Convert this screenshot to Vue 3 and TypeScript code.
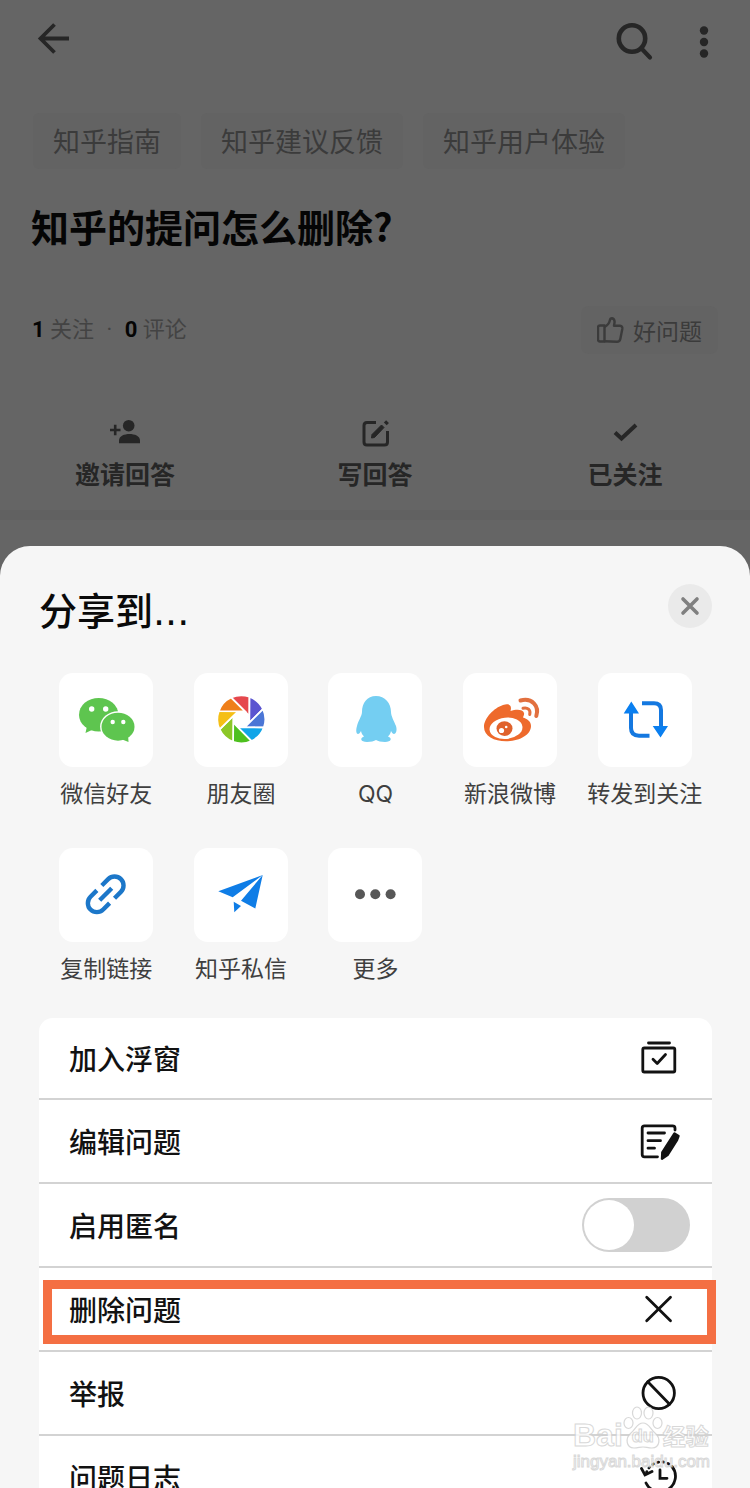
<script setup lang="ts">
import { ref } from 'vue'

interface ShareTarget { id: string; label: string }
interface MenuRow { id: string; label: string; highlighted?: boolean }

const tags: string[] = ['知乎指南', '知乎建议反馈', '知乎用户体验']

const actions = [
  { id: 'invite', label: '邀请回答' },
  { id: 'write', label: '写回答' },
  { id: 'followed', label: '已关注' },
]

const targets: ShareTarget[] = [
  { id: 'wechat', label: '微信好友' },
  { id: 'moments', label: '朋友圈' },
  { id: 'qq', label: 'QQ' },
  { id: 'weibo', label: '新浪微博' },
  { id: 'repost', label: '转发到关注' },
  { id: 'link', label: '复制链接' },
  { id: 'message', label: '知乎私信' },
  { id: 'more', label: '更多' },
]

const rows: MenuRow[] = [
  { id: 'float', label: '加入浮窗' },
  { id: 'edit', label: '编辑问题' },
  { id: 'anonymous', label: '启用匿名' },
  { id: 'delete', label: '删除问题', highlighted: true },
  { id: 'report', label: '举报' },
  { id: 'log', label: '问题日志' },
]

const anonymous = ref(false)

// Aperture blades: each one is a rim arc closed by a corner of the inner octagon.
const bladeColors = ['#e5484d', '#5b55d0', '#4b76d6', '#10a5e8', '#4ec01e', '#8cc727', '#f5bf16', '#ef7f1a']
const point = (radius: number, degrees: number): string => {
  const a = (degrees * Math.PI) / 180
  return `${(47.3 + radius * Math.cos(a)).toFixed(2)} ${(46.3 + radius * Math.sin(a)).toFixed(2)}`
}
const blades = bladeColors.map((fill, i) => {
  const start = -115 + i * 45
  return { fill, d: `M${point(24, start)}A24 24 0 0 1 ${point(24, start + 45)}L${point(8.8, start + 94.5)}Z` }
})
</script>

<template>
  <div class="screen">
    <main class="question">
      <header class="topbar">
        <button class="icon-btn" aria-label="返回">
          <svg viewBox="0 0 44 44"><path d="M37 18.5H8.500M22.500 4.500L8.500 18.500L22.500 32.500" fill="none" stroke="currentColor" stroke-width="3.8" /></svg>
        </button>
        <div class="topbar-right">
          <button class="icon-btn" aria-label="搜索">
            <svg viewBox="0 0 44 44"><g fill="none" stroke="currentColor" stroke-width="4.6"><circle cx="20" cy="18.500" r="13.200" /><path d="M29.500 28.500L38 37.500" stroke-linecap="round" stroke-width="4.2" /></g></svg>
          </button>
          <button class="icon-btn" aria-label="菜单">
            <svg viewBox="0 0 44 44" fill="currentColor"><circle cx="22" cy="10.500" r="4.200" /><circle cx="22" cy="22" r="4.200" /><circle cx="22" cy="33.500" r="4.200" /></svg>
          </button>
        </div>
      </header>

      <div class="tags">
        <a v-for="tag in tags" :key="tag" href="#" class="tag">{{ tag }}</a>
      </div>

      <h1 class="title">知乎的提问怎么删除?</h1>

      <div class="stats">
        <p class="counts"><b>1</b> 关注 <span class="dot">·</span> <b>0</b> 评论</p>
        <button class="good">
          <svg viewBox="0 0 28 28" fill="none" stroke="currentColor" stroke-width="2.4" stroke-linejoin="round">
            <path d="M3 9.500H7.500V25.500H3Q1 25.500 1 23.500V11.500Q1 9.500 3 9.500Z" />
            <path d="M7.500 11Q12 8.500 12.800 4.500Q13.200 2.300 15 2.300Q17.500 2.800 17.600 6L17 9.800H23Q25.800 10 25.300 13L23.300 23Q22.700 25.800 20 25.800L7.500 25.300" />
          </svg>
          <span>好问题</span>
        </button>
      </div>

      <nav class="actions">
        <button v-for="action in actions" :key="action.id" class="action">
          <svg v-if="action.id === 'invite'" viewBox="0 0 32 32" fill="currentColor">
            <circle cx="19.700" cy="9.700" r="5.800" />
            <path d="M10 27.300V24.500C10 20 15.500 18 20.500 18S31 20 31 24.500V27.300Z" />
            <path d="M1 14H11.500M6.200 8.700V19.300" stroke="currentColor" stroke-width="2.600" />
          </svg>
          <svg v-else-if="action.id === 'write'" viewBox="0 0 32 32" fill="none" stroke="currentColor" stroke-width="3">
            <path d="M17 6.500H8Q5 6.500 5 9.500V26Q5 29 8 29H25.500Q28.500 29 28.500 26V15" />
            <path d="M12.500 22L13 18.500L22.500 9L25 11.500L15.500 21.500Z" fill="currentColor" stroke-width="1" />
            <path d="M26.300 7.900L28.500 5.700" stroke-width="4" />
          </svg>
          <svg v-else viewBox="0 0 32 32" fill="none" stroke="currentColor" stroke-width="4"><path d="M6 16.500L12.500 22.500L27 9" /></svg>
          <span>{{ action.label }}</span>
        </button>
      </nav>
      <div class="band"></div>
    </main>

    <section class="sheet" role="dialog" aria-labelledby="sheet-title">
      <header class="sheet-head">
        <h2 id="sheet-title">分享到<span class="ellipsis">...</span></h2>
        <button class="close" aria-label="关闭">
          <svg viewBox="0 0 44 44"><path d="M15 15L29 29M29 15L15 29" stroke="currentColor" stroke-width="3.600" stroke-linecap="round" /></svg>
        </button>
      </header>

      <div class="targets">
        <button v-for="target in targets" :key="target.id" class="target">
          <span class="tile">
            <svg v-if="target.id === 'wechat'" viewBox="0 0 94 94">
              <g fill="#5ec54f">
                <path d="M28 53L26.500 60L35 56Z" /><ellipse cx="39.700" cy="41.700" rx="19.700" ry="16.800" />
                <ellipse cx="59" cy="53.700" rx="17.900" ry="15.400" fill="#fff" />
                <path d="M69 61L69.500 69L62 66Z" /><ellipse cx="59" cy="53.700" rx="16.500" ry="14" />
              </g>
              <g fill="#fff"><circle cx="32.700" cy="36" r="2.700" /><circle cx="46.700" cy="36" r="2.700" /><circle cx="53.700" cy="49" r="2.200" /><circle cx="64.300" cy="49" r="2.200" /></g>
            </svg>
            <svg v-else-if="target.id === 'moments'" viewBox="0 0 94 94">
              <path v-for="blade in blades" :key="blade.fill" :d="blade.d" :fill="blade.fill" stroke="#fff" stroke-width="1.800" />
            </svg>
            <svg v-else-if="target.id === 'qq'" viewBox="0 0 94 94">
              <path fill="#74cef2" d="M48 23C39 23 34 30 34 39C34 43 30 48 29 53C27.500 58 28.500 61 30 61C31 61 32 60 33 58C33.500 60.500 34.500 62 36 63.500C31.500 65 32.500 69 39 69C43 69 46 68 48 67C50 68 53 69 57 69C63.500 69 64.500 65 60 63.500C61.500 62 62.500 60.500 63 58C64 60 65 61 66 61C67.500 61 69.500 58 68 53C66 48 63 43 63 39C63 30 57 23 48 23Z" />
            </svg>
            <svg v-else-if="target.id === 'weibo'" viewBox="0 0 94 94">
              <path fill="#ee6a2c" d="M21 54C21 45 31 35 40 32C47 30 49 33 47.500 38C53 36 60 36 61 40C61.500 42 60 44 60 44.500C64 46 68 48 68 53C68 62 56 68.300 43 68.300C31 68.300 21 63 21 54Z" />
              <ellipse cx="43" cy="55.300" rx="16.500" ry="10.700" fill="#fff" transform="rotate(-6 43 55.300)" />
              <ellipse cx="41.500" cy="55.600" rx="8" ry="7.400" fill="#e0622c" />
              <circle cx="38.500" cy="57.500" r="2.600" fill="#fff" /><circle cx="43.200" cy="54" r="1.300" fill="#fff" />
              <g fill="none" stroke="#e2703f" stroke-linecap="round"><path d="M57.500 27.500C69 24.500 76.500 33 73.300 43" stroke-width="4" /><path d="M60 35.300C64.500 34 68 37 66.700 41.500" stroke-width="3" /></g>
            </svg>
            <svg v-else-if="target.id === 'repost'" viewBox="0 0 94 94">
              <path d="M33 39V55Q33 62.700 41 62.700H51.500M44 30.200H56Q63 30.200 63 37V54" fill="none" stroke="#1478e0" stroke-width="4" />
              <path d="M33.300 28.500L41 40.500H25.700ZM62.500 64.500L54.700 53H70Z" fill="#0a7ff0" />
            </svg>
            <svg v-else-if="target.id === 'link'" viewBox="0 0 94 94">
              <g transform="translate(46.700 46.300) rotate(-45)" fill="none" stroke="#1c77c9" stroke-width="4.4">
                <path d="M3.500 -9H12.500A9 9 0 0 1 12.500 9H3.500M-3.500 -9H-12.500A9 9 0 0 0 -12.500 9H-3.500M-8.500 0H8.500" />
              </g>
            </svg>
            <svg v-else-if="target.id === 'message'" viewBox="0 0 94 94" fill="#0f7de6">
              <path d="M68.700 27L24.300 43.300L38.700 49.300ZM68.700 27L61.300 60.500L47 52.700ZM39.700 53.700L47 58L40.300 64.300Z" />
            </svg>
            <svg v-else viewBox="0 0 94 94" fill="#575757"><circle cx="32" cy="46.300" r="5" /><circle cx="47.300" cy="46.300" r="5" /><circle cx="62.600" cy="46.300" r="5" /></svg>
          </span>
          <span class="target-label">{{ target.label }}</span>
        </button>
      </div>

      <ul class="menu">
        <li v-for="row in rows" :key="row.id" class="row" :class="{ highlighted: row.highlighted }">
          <label v-if="row.id === 'anonymous'" class="entry">
            <span>{{ row.label }}</span>
            <input v-model="anonymous" class="switch" type="checkbox" role="switch" />
          </label>
          <button v-else class="entry">
            <span>{{ row.label }}</span>
            <svg viewBox="0 0 40 40" fill="none" stroke="currentColor" stroke-width="2.800" stroke-linecap="round" stroke-linejoin="round">
              <template v-if="row.id === 'float'">
                <path d="M8.500 5H29.500" /><rect x="2.800" y="10" width="32" height="24" rx="1.500" /><path d="M13 21.300L17.200 25.500L25.500 16.500" />
              </template>
              <template v-else-if="row.id === 'edit'">
                <path d="M35 9V7Q35 4.800 32.500 4.800H4.500Q2.200 4.800 2.200 7V33.500Q2.200 35.800 4.500 35.800H17.500M8 12H24.500M8 19.700H20.500M8 27.200H14.500" />
                <path d="M34.500 12.500L38.500 15L37 19L27.500 34L22 37.700L22.300 31.500Z" fill="currentColor" stroke-width="2.400" />
              </template>
              <path v-else-if="row.id === 'delete'" d="M6.700 8.300L30.500 31.700M30.500 8.300L6.700 31.700" />
              <template v-else-if="row.id === 'report'"><circle cx="18.700" cy="20" r="15.700" /><path d="M7.800 8.800L29.600 31.200" /></template>
              <template v-else>
                <path d="M32 9.500A15.500 15.500 0 1 1 6 26" /><path d="M6.500 15.500A15.500 15.500 0 0 1 30.500 8" stroke-dasharray="1 4.200" />
                <path d="M1.500 11.500L5 18L12 14.500M20 13V21.300H27" stroke-linejoin="miter" />
              </template>
            </svg>
          </button>
        </li>
      </ul>
    </section>

    <div class="watermark" aria-hidden="true">
      <div class="brand">
        <span>Bai</span>
        <span class="paw">
          <svg viewBox="0 0 40 44" fill="#fff" stroke="#cfcfcf" stroke-width="1.200">
            <ellipse cx="5.500" cy="17" rx="4.500" ry="5.500" /><ellipse cx="14" cy="7" rx="4.500" ry="6" /><ellipse cx="25.500" cy="7" rx="4.500" ry="6" /><ellipse cx="34.500" cy="17" rx="4.500" ry="5.500" />
            <path d="M20 17C14 17 13 23 8 27C2 32 3 42 11 42C15 42 17 41 20 41S25 42 29 42C37 42 38 32 32 27C27 23 26 17 20 17Z" />
          </svg>
          <span class="du">du</span>
        </span>
        <span class="cn">经验</span>
      </div>
      <div class="site">jingyan.baidu.com</div>
    </div>
  </div>
</template>

<style>
body {
  background: #656565;
}
</style>

<style scoped>
.screen {
  position: relative;
  display: flex;
  flex-direction: column;
  height: 100vh;
  overflow: hidden;
  background: #656565;
  color: #262626;
  font-family: Roboto, "Noto Sans CJK SC", sans-serif;
}
button {
  padding: 0;
  border: 0;
  background: none;
  color: inherit;
  font: inherit;
}
h1, h2, p, ul {
  margin: 0;
  padding: 0;
}
svg {
  display: block;
  flex: none;
}
.question {
  flex: none;
}
.topbar {
  display: flex;
  align-items: center;
  justify-content: space-between;
  height: 84px;
  padding: 0 24px 0 32px;
}
.topbar-right {
  display: flex;
  gap: 26px;
}
.icon-btn,
.icon-btn svg {
  width: 44px;
  height: 44px;
}
.tags {
  display: flex;
  gap: 20px;
  padding: 29px 33px 0;
}
.tag {
  padding: 4px 20px 0;
  border-radius: 6px;
  background: #636363;
  color: #3b3b3b;
  font-size: 27px;
  line-height: 52px;
  text-decoration: none;
  white-space: nowrap;
}
.title {
  padding: 29px 31px 0;
  color: #050505;
  font-family: "Noto Sans CJK SC", sans-serif;
  font-size: 38px;
  font-weight: 700;
  line-height: 56px;
}
.stats {
  display: flex;
  align-items: center;
  justify-content: space-between;
  padding: 52px 32px 0;
}
.counts {
  color: #434343;
  font-size: 22px;
  line-height: 32px;
}
.counts b {
  color: #050505;
}
.dot {
  padding: 0 7px;
}
.good {
  display: flex;
  align-items: center;
  gap: 8px;
  height: 48px;
  padding: 0 16px;
  border-radius: 8px;
  background: #636363;
  color: #3b3b3b;
  font-size: 23px;
}
.good svg {
  width: 28px;
  height: 28px;
}
.actions {
  display: grid;
  grid-template-columns: repeat(3, 1fr);
  padding-top: 62px;
}
.action {
  display: flex;
  flex-direction: column;
  align-items: center;
  gap: 10px;
  font-size: 25px;
  font-weight: 700;
  line-height: 36px;
}
.action svg {
  width: 32px;
  height: 32px;
}
.band {
  height: 10px;
  margin: 16px 0 26px;
  background: #616161;
}
.sheet {
  flex: 1 0 auto;
  padding: 38px 38px 0 39px;
  border-radius: 30px 30px 0 0;
  background: #f6f6f6;
}
.sheet-head {
  display: flex;
  align-items: flex-start;
  justify-content: space-between;
}
.sheet-head h2 {
  color: #0a0a0a;
  font-size: 38px;
  font-weight: 500;
  line-height: 56px;
}
.ellipsis {
  font-family: "DejaVu Sans", sans-serif;
  font-weight: 400;
}
.close {
  width: 44px;
  height: 44px;
  border-radius: 50%;
  background: #eaeaea;
  color: #808080;
}
.targets {
  display: grid;
  grid-template-columns: repeat(5, 1fr);
  row-gap: 38px;
  padding-top: 33px;
}
.target {
  display: flex;
  flex-direction: column;
  align-items: center;
  gap: 11px;
}
.tile {
  width: 94px;
  height: 94px;
  border-radius: 14px;
  background: #fff;
}
.target-label {
  color: #3f3f3f;
  font-family: Inter, "Noto Sans CJK SC", sans-serif;
  font-size: 23px;
  line-height: 32px;
  white-space: nowrap;
}
.menu {
  margin-top: 33px;
  border-radius: 14px 14px 0 0;
  background: #fff;
  list-style: none;
}
.row {
  position: relative;
  border-bottom: 2px solid #d3d3d3;
}
.entry {
  display: flex;
  align-items: center;
  justify-content: space-between;
  width: 100%;
  height: 82px;
  box-sizing: border-box;
  padding: 0 32px 0 30px;
  color: #121212;
  font-size: 28px;
  font-weight: 500;
  text-align: left;
}
.row:first-child .entry {
  height: 80px;
}
.entry svg {
  width: 40px;
  height: 40px;
}
label.entry {
  padding-right: 22px;
}
.switch {
  appearance: none;
  width: 108px;
  height: 54px;
  margin: 0;
  padding: 2px;
  border-radius: 27px;
  background: #d1d1d1;
}
.switch::before {
  content: "";
  display: block;
  width: 50px;
  height: 50px;
  border-radius: 50%;
  background: #fff;
}
.switch:checked::before {
  margin-left: auto;
}
.highlighted::after {
  content: "";
  position: absolute;
  inset: 12px -4px 6px 4px;
  border: 9px solid #f46f43;
  pointer-events: none;
}
.watermark {
  position: absolute;
  right: 40px;
  bottom: 14px;
  color: #fff;
  font-family: "Liberation Sans", "Noto Sans CJK SC", sans-serif;
  opacity: 0.8;
  pointer-events: none;
  -webkit-text-stroke: 1px #cfcfcf;
}
.brand {
  display: flex;
  align-items: flex-end;
  font-size: 32px;
  font-weight: 700;
  line-height: 30px;
}
.paw {
  position: relative;
}
.paw svg {
  width: 40px;
  height: 44px;
}
.du {
  position: absolute;
  inset: auto 0 4px;
  font-size: 18px;
  line-height: 20px;
  text-align: center;
}
.cn {
  font-size: 23px;
  line-height: 26px;
}
.site {
  font-size: 17px;
  line-height: 24px;
  text-align: right;
}
</style>
